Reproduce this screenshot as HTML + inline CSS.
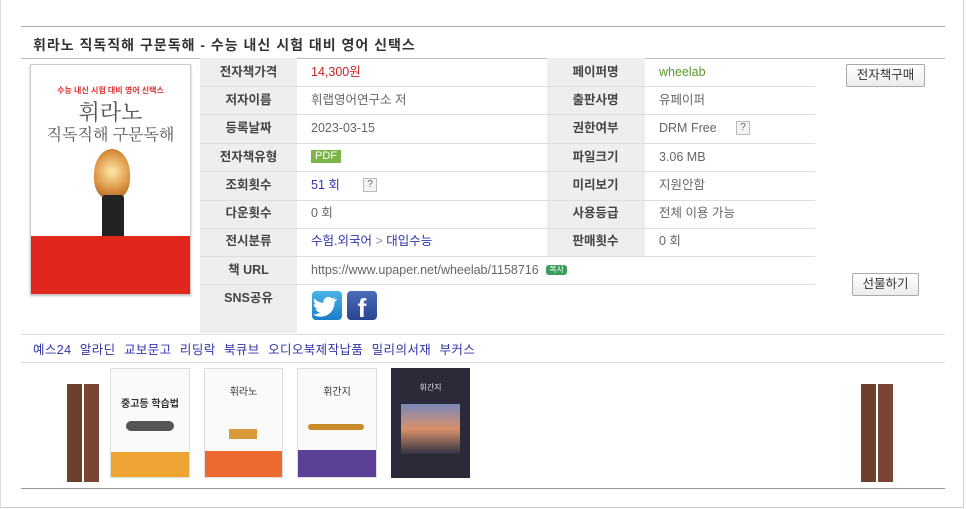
<!DOCTYPE html>
<html><head><meta charset="utf-8"><style>
*{margin:0;padding:0;box-sizing:border-box}
body{width:966px;height:509px;background:#fff;position:relative;overflow:hidden;font-family:"Liberation Sans","Noto Sans CJK KR",sans-serif;font-size:12px;color:#555}
.a{position:absolute}
.hl{position:absolute;height:1px;background:#ddd}
.lb{position:absolute;background:#eeeeee}
.l{position:absolute;width:97px;text-align:center;font-weight:bold;color:#444;font-size:12.5px;line-height:16px}
.v{position:absolute;font-size:12.5px;color:#666;line-height:16px}
.btn{position:absolute;border:1px solid #aaa;background:linear-gradient(#fff,#ececec);font-size:12.5px;color:#333;text-align:center;border-radius:2px}
.q{display:inline-block;width:14px;height:14px;border:1px solid #bbb;background:#f3f3f3;font-size:10px;line-height:12px;text-align:center;color:#666}
</style></head><body>
<div class="a" style="left:0;top:0;width:964px;height:508px;border:1px solid #ccc;border-top:none;border-left:1px solid #ddd"></div>
<div class="hl" style="left:21px;top:26px;width:924px;background:#aaa"></div>
<div class="a" style="left:33px;top:35px;font-size:14px;font-weight:bold;color:#333;letter-spacing:1px">휘라노 직독직해 구문독해 - 수능 내신 시험 대비 영어 신택스</div>
<div class="hl" style="left:21px;top:58px;width:924px;background:#bbb"></div>

<div class="a" style="left:30px;top:64px;width:161px;height:231px;border:1px solid #ccc;background:#fff;box-shadow:0 1px 2px #bbb">
 <div class="a" style="left:0;top:20px;width:159px;text-align:center;color:#d33;font-size:8px;font-weight:bold">수능 내신 시험 대비 영어 신택스</div>
 <div class="a" style="left:0;top:31px;width:159px;text-align:center;color:#555;font-size:22px;font-family:'Noto Serif CJK SC',serif">휘라노</div>
 <div class="a" style="left:0;top:57px;width:159px;text-align:center;color:#555;font-size:16px;font-family:'Noto Serif CJK SC',serif">직독직해 구문독해</div>
 <div class="a" style="left:63px;top:84px;width:36px;height:50px;border-radius:50% 50% 40% 40%;background:radial-gradient(circle at 50% 45%,#ffe9a8,#d98d3c 60%,#8a5a2a)"></div>
 <div class="a" style="left:71px;top:130px;width:22px;height:45px;background:#222;border-radius:3px"></div>
 <div class="a" style="left:0;top:171px;width:159px;height:58px;background:#e0261d"></div>
</div>

<div class="lb" style="left:200px;top:58px;width:97px;height:275px"></div>
<div class="lb" style="left:547px;top:58px;width:98px;height:198px"></div>
<div class="hl" style="left:200px;top:86px;width:615px"></div>
<div class="hl" style="left:200px;top:114px;width:615px"></div>
<div class="hl" style="left:200px;top:143px;width:615px"></div>
<div class="hl" style="left:200px;top:171px;width:615px"></div>
<div class="hl" style="left:200px;top:200px;width:615px"></div>
<div class="hl" style="left:200px;top:228px;width:615px"></div>
<div class="hl" style="left:200px;top:256px;width:615px"></div>
<div class="hl" style="left:200px;top:284px;width:615px"></div>

<div class="l" style="left:200px;top:64px">전자책가격</div>
<div class="l" style="left:200px;top:92px">저자이름</div>
<div class="l" style="left:200px;top:120px">등록날짜</div>
<div class="l" style="left:200px;top:149px">전자책유형</div>
<div class="l" style="left:200px;top:177px">조회횟수</div>
<div class="l" style="left:200px;top:205px">다운횟수</div>
<div class="l" style="left:200px;top:233px">전시분류</div>
<div class="l" style="left:200px;top:262px">책 URL</div>
<div class="l" style="left:200px;top:290px">SNS공유</div>
<div class="l" style="left:547px;top:64px">페이퍼명</div>
<div class="l" style="left:547px;top:92px">출판사명</div>
<div class="l" style="left:547px;top:120px">권한여부</div>
<div class="l" style="left:547px;top:149px">파일크기</div>
<div class="l" style="left:547px;top:177px">미리보기</div>
<div class="l" style="left:547px;top:205px">사용등급</div>
<div class="l" style="left:547px;top:233px">판매횟수</div>

<div class="v" style="left:311px;top:64px;color:#c22">14,300원</div>
<div class="v" style="left:311px;top:92px">휘랩영어연구소 저</div>
<div class="v" style="left:311px;top:120px">2023-03-15</div>
<div class="v" style="left:311px;top:150px;background:#7bb547;color:#fff;padding:0 4px;line-height:13px;font-size:11px">PDF</div>
<div class="v" style="left:311px;top:177px;color:#33a">51 회</div>
<div class="q a" style="left:363px;top:178px">?</div>
<div class="v" style="left:311px;top:205px">0 회</div>
<div class="v" style="left:311px;top:233px;color:#33a">수험.외국어 <span style="color:#999">&gt;</span> 대입수능</div>
<div class="v" style="left:311px;top:262px">https://www.upaper.net/wheelab/1158716 <span style="display:inline-block;background:#3a9e5a;color:#fff;font-size:8px;line-height:10px;padding:0 3px;border-radius:3px;margin-left:4px;vertical-align:2px">복사</span></div>
<div class="a" style="left:312px;top:291px;width:30px;height:29px;border-radius:4px;background:linear-gradient(#4ab4ea,#1a7ec8)">
<svg width="30" height="29" viewBox="0 0 30 29"><path d="M24 8c-1 .5-2 .7-3 .8 1-.6 1.8-1.5 2.2-2.6-1 .6-2 1-3.2 1.2a5 5 0 0 0-8.5 4.5C7.500 11.700 4.500 10 2.500 7.500c-1.200 2-.5 4.700 1.500 6-.8 0-1.600-.3-2.300-.6 0 2.400 1.700 4.400 4 4.900-.7.2-1.500.2-2.200.1.6 2 2.500 3.400 4.600 3.400A10 10 0 0 1 1 23.500 14 14 0 0 0 22.500 11.700V11c1-.7 1.800-1.700 2.500-2.700z" fill="#fff"/></svg></div>
<div class="a" style="left:347px;top:291px;width:30px;height:29px;border-radius:4px;background:linear-gradient(#4a6cb8,#2a4590);color:#fff;font-size:26px;font-weight:bold;text-align:center;line-height:34px">f</div>

<div class="v" style="left:659px;top:64px;color:#5a9a2a">wheelab</div>
<div class="v" style="left:659px;top:92px">유페이퍼</div>
<div class="v" style="left:659px;top:120px">DRM Free</div>
<div class="q a" style="left:736px;top:121px">?</div>
<div class="v" style="left:659px;top:149px">3.06 MB</div>
<div class="v" style="left:659px;top:177px">지원안함</div>
<div class="v" style="left:659px;top:205px">전체 이용 가능</div>
<div class="v" style="left:659px;top:233px">0 회</div>

<div class="btn" style="left:846px;top:64px;width:79px;height:23px;line-height:21px">전자책구매</div>
<div class="btn" style="left:852px;top:273px;width:67px;height:23px;line-height:21px">선물하기</div>

<div class="hl" style="left:21px;top:334px;width:924px"></div>
<div class="a" style="left:33px;top:339px;font-size:12.5px;color:#33a;word-spacing:4.5px;letter-spacing:0.4px">예스24 알라딘 교보문고 리딩락 북큐브 오디오북제작납품 밀리의서재 부커스</div>
<div class="hl" style="left:21px;top:362px;width:924px"></div>

<div class="a" style="left:67px;top:384px;width:15px;height:98px;background:#6e3f2c"></div>
<div class="a" style="left:84px;top:384px;width:15px;height:98px;background:#7a4633"></div>
<div class="a" style="left:110px;top:368px;width:80px;height:110px;background:#fafafa;border:1px solid #ddd"><div class="a" style="left:0;bottom:0;width:78px;height:25px;background:#efa534"></div><div class="a" style="left:0;top:26px;width:78px;text-align:center;font-size:10px;font-weight:bold;color:#333">중고등 학습법</div><div class="a" style="left:15px;top:52px;width:48px;height:10px;background:#555;border-radius:5px"></div></div>
<div class="a" style="left:204px;top:368px;width:79px;height:110px;background:#fafafa;border:1px solid #ddd"><div class="a" style="left:0;bottom:0;width:77px;height:26px;background:#ec6a30"></div><div class="a" style="left:0;top:14px;width:77px;text-align:center;font-size:10px;color:#333">휘라노</div><div class="a" style="left:24px;top:60px;width:28px;height:10px;background:#d99a3a"></div></div>
<div class="a" style="left:297px;top:368px;width:80px;height:110px;background:#fafafa;border:1px solid #ddd"><div class="a" style="left:0;bottom:0;width:78px;height:27px;background:#5c3f96"></div><div class="a" style="left:0;top:14px;width:78px;text-align:center;font-size:10px;color:#333">휘간지</div><div class="a" style="left:10px;top:55px;width:56px;height:6px;background:#c98a2a;border-radius:3px"></div></div>
<div class="a" style="left:391px;top:368px;width:79px;height:110px;background:#2a2a38"><div class="a" style="left:10px;top:36px;width:59px;height:50px;background:linear-gradient(#7a88b8,#d8906a,#334)"></div><div class="a" style="left:0;top:14px;width:79px;text-align:center;font-size:8px;color:#ddd">휘간지</div></div>
<div class="a" style="left:861px;top:384px;width:15px;height:98px;background:#6e3f2c"></div>
<div class="a" style="left:878px;top:384px;width:15px;height:98px;background:#7a4633"></div>
<div class="hl" style="left:21px;top:488px;width:924px;background:#999"></div>
</body></html>
